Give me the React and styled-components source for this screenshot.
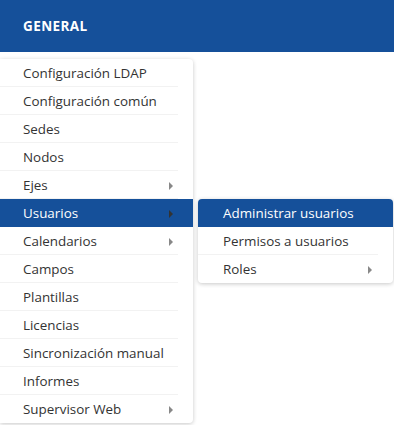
import styled, { createGlobalStyle } from 'styled-components';

const Global = createGlobalStyle`
  html, body { margin: 0; padding: 0; background: #fff; }
  body { font-family: "Open Sans", "Noto Sans", sans-serif; }
`;

const Page = styled.div`
  width: 394px;
  height: 425px;
  position: relative;
  overflow: hidden;
`;

// Top blue bar with the section title
const Header = styled.header`
  height: 52px;
  background: #15509a;
  display: flex;
  align-items: center;
  padding-left: 23px;
  color: #fff;
  font-weight: 700;
  font-size: 13.5px;
  letter-spacing: 0.4px;
`;

const MenuArea = styled.div`
  display: flex;
  align-items: flex-start;
  padding-top: 7px;
`;

const Menu = styled.ul`
  list-style: none;
  margin: 0;
  padding: 0;
  width: ${({ width }) => width}px;
  margin-top: ${({ offset }) => offset || 0}px;
  margin-left: ${({ gap }) => gap || 0}px;
  background: #fff;
  border-radius: ${({ square }) => (square ? '0 4px 4px 0' : '4px')};
  box-shadow: 0 1px 4px rgba(0, 0, 0, 0.22);
  overflow: hidden;
`;

const Item = styled.li`
  position: relative;
  height: 28px;
  display: flex;
  align-items: center;
  padding-left: ${({ indent }) => indent}px;
  font-size: 13.4px;
  color: ${({ active }) => (active ? '#fff' : '#333')};
  background: ${({ active }) => (active ? '#15509a' : 'transparent')};
  &:not(:last-child)::after {
    content: '';
    position: absolute;
    left: 0;
    right: 15px;
    bottom: 0;
    height: 1px;
    background: ${({ active }) => (active ? 'transparent' : '#f2f2f2')};
  }
`;

const Caret = styled.span`
  position: absolute;
  right: ${({ right }) => right}px;
  top: 11px;
  width: 0;
  height: 0;
  border-top: 4px solid transparent;
  border-bottom: 4px solid transparent;
  border-left: 4px solid ${({ dark }) => (dark ? '#333' : '#888')};
`;

const mainItems = [
  { label: 'Configuración LDAP' },
  { label: 'Configuración común' },
  { label: 'Sedes' },
  { label: 'Nodos' },
  { label: 'Ejes', sub: true },
  { label: 'Usuarios', sub: true, active: true },
  { label: 'Calendarios', sub: true },
  { label: 'Campos' },
  { label: 'Plantillas' },
  { label: 'Licencias' },
  { label: 'Sincronización manual' },
  { label: 'Informes' },
  { label: 'Supervisor Web', sub: true },
];

const userItems = [
  { label: 'Administrar usuarios', active: true },
  { label: 'Permisos a usuarios' },
  { label: 'Roles', sub: true },
];

export default function App() {
  return (
    <Page>
      <Global />
      <Header>GENERAL</Header>
      <MenuArea>
        <Menu width={193} square>
          {mainItems.map((it) => (
            <Item key={it.label} indent={23} active={it.active}>
              {it.label}
              {it.sub && <Caret right={20} dark={it.active} />}
            </Item>
          ))}
        </Menu>
        <Menu width={195} offset={140} gap={5}>
          {userItems.map((it) => (
            <Item key={it.label} indent={25} active={it.active}>
              {it.label}
              {it.sub && <Caret right={21} />}
            </Item>
          ))}
        </Menu>
      </MenuArea>
    </Page>
  );
}
